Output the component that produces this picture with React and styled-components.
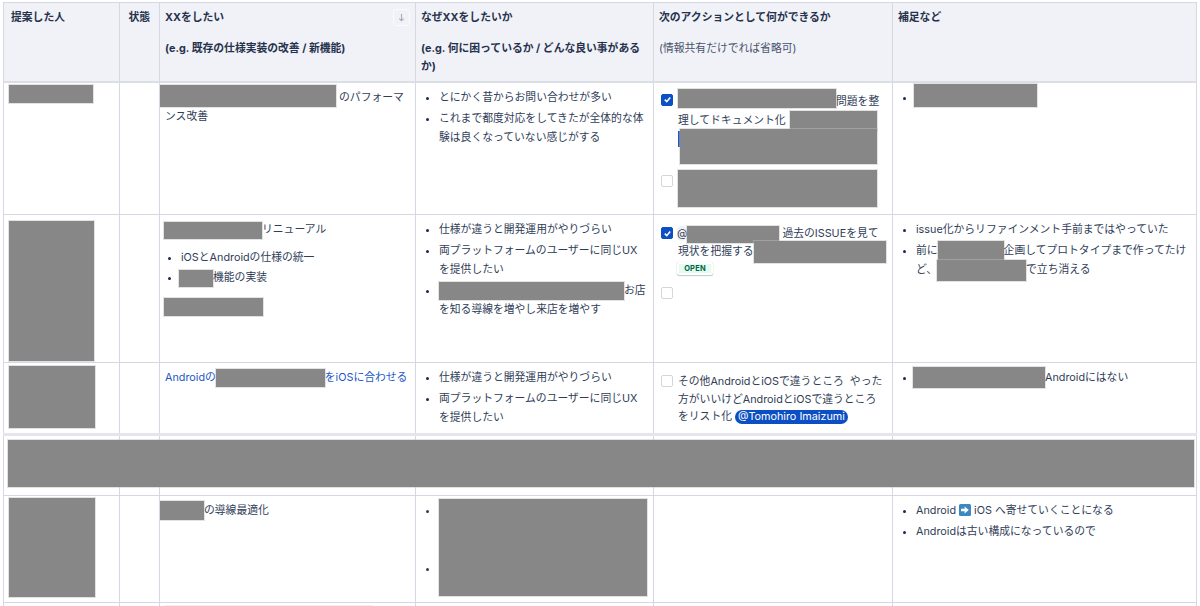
import styled, { createGlobalStyle } from 'styled-components';

const GlobalStyle = createGlobalStyle`
  html, body {
    margin: 0;
    background: #fff;
    overflow: hidden;
  }
  body {
    font-family: Inter, "Noto Sans CJK JP", sans-serif;
    font-size: 10.8px;
    color: #303d58;
  }
`;

const App = () => {
  return (
    <Page>
      <GlobalStyle />
      <Table>
        <colgroup>
          <col width="116" />
          <col width="40" />
          <col width="256" />
          <col width="238" />
          <col width="239" />
          <col width="304" />
        </colgroup>
        <thead>
          <tr>
            <Th $first>提案した人</Th>
            <Th $right>状態</Th>
            <Th>
              XXをしたい
              <SortButton><ArrowDown /></SortButton>
              <HeadNote>(e.g. 既存の仕様実装の改善 / 新機能)</HeadNote>
            </Th>
            <Th>
              なぜXXをしたいか
              <HeadNote>(e.g. 何に困っているか / どんな良い事があるか)</HeadNote>
            </Th>
            <Th>
              次のアクションとして何ができるか
              <HeadNote $plain>(情報共有だけでれば省略可)</HeadNote>
            </Th>
            <Th>補足など</Th>
          </tr>
        </thead>
        <tbody>
          <Row $h={133}>
            <Td $flush><Redact $w={84} $h={18} $block $mt={-1} /></Td>
            <Td />
            <Td>
              <Redact $w={176} $h={22} $ml={-5} $up={1} /> のパフォーマンス改善
            </Td>
            <Td>
              <Bullets>
                <li>とにかく昔からお問い合わせが多い</li>
                <li>これまで都度対応をしてきたが全体的な体験は良くなっていない感じがする</li>
              </Bullets>
            </Td>
            <Td>
              <Task $mt={2}>
                <Checkbox checked />
                <TaskText>
                  <Redact $w={158} $h={19} $up={1.5} />問題を整理してドキュメント化<Redact $w={87} $h={20} $ml={4} />
                  <SelectedRow>
                    <Selection />
                    <Redact $w={197} $h={35} $block />
                  </SelectedRow>
                </TaskText>
              </Task>
              <Task $mt={7}>
                <Checkbox />
                <TaskText $mt={-1}><Redact $w={199} $h={37} $block /></TaskText>
              </Task>
            </Td>
            <Td>
              <Bullets>
                <li><Redact $w={123} $h={23} $ml={-2} $up={1} /></li>
              </Bullets>
            </Td>
          </Row>
          <Row $h={148}>
            <Td $flush><Redact $w={85} $h={140} $block $mt={3} /></Td>
            <Td />
            <Td>
              <Redact $w={98} $h={17} $ml={-1} />リニューアル
              <InnerBullets>
                <li>iOSとAndroidの仕様の統一</li>
                <li><Redact $w={34} $h={17} $ml={-2} />機能の実装</li>
              </InnerBullets>
              <Redact $w={99} $h={18} $block $ml={-1} $mt={11} />
            </Td>
            <Td>
              <Bullets>
                <li>仕様が違うと開発運用がやりづらい</li>
                <li>両プラットフォームのユーザーに同じUXを提供したい</li>
                <li><Redact $w={185} $h={18} />お店を知る導線を増やし来店を増やす</li>
              </Bullets>
            </Td>
            <Td>
              <Task $mt={3}>
                <Checkbox checked />
                <TaskText $tight>
                  <Mention>@</Mention><Redact $w={92} $h={17} /> 過去のISSUEを見て現状を把握する<Redact $w={132} $h={22} />
                  <Lozenge><span>OPEN</span></Lozenge>
                </TaskText>
              </Task>
              <Task $mt={8}>
                <Checkbox />
              </Task>
            </Td>
            <Td>
              <Bullets>
                <li>issue化からリファインメント手前まではやっていた</li>
                <li>前に<Redact $w={66} $h={20} />企画してプロトタイプまで作ってたけど、<Redact $w={89} $h={21} />で立ち消える</li>
              </Bullets>
            </Td>
          </Row>
          <Row $h={72} $thick>
            <Td $flush><Redact $w={86} $h={62} $block /></Td>
            <Td />
            <Td>
              <Link>Androidの<Redact $w={109} $h={18} />をiOSに合わせる</Link>
            </Td>
            <Td>
              <Bullets>
                <li>仕様が違うと開発運用がやりづらい</li>
                <li>両プラットフォームのユーザーに同じUXを提供したい</li>
              </Bullets>
            </Td>
            <Td>
              <Task $mt={3}>
                <Checkbox />
                <TaskText $tight $pr={5}>
                  その他AndroidとiOSで違うところ&nbsp; やった方がいいけどAndroidとiOSで違うところをリスト化 <BlueMention>@Tomohiro Imaizumi</BlueMention>
                </TaskText>
              </Task>
            </Td>
            <Td>
              <Bullets>
                <li><Redact $w={132} $h={21} $ml={-3} $up={0.5} />Androidにはない</li>
              </Bullets>
            </Td>
          </Row>
          <Row $h={61}>
            <Td /><Td /><Td /><Td /><Td /><Td />
          </Row>
          <Row $h={107}>
            <Td $flush><Redact $w={86} $h={99} $block $mt={-1} /></Td>
            <Td />
            <Td>
              <Redact $w={44} $h={19} $ml={-5} $up={0.5} />の導線最適化
            </Td>
            <Td>
              <TallBullets>
                <li />
                <li />
                <Redact $w={208} $h={97} $over />
              </TallBullets>
            </Td>
            <Td />
            <Td>
              <Bullets>
                <li>Android <ArrowEmoji /> iOS へ寄せていくことになる</li>
                <li>Androidは古い構成になっているので</li>
              </Bullets>
            </Td>
          </Row>
          <Row $h={10}>
            <Td /><Td />
            <Td><FaintBar /></Td>
            <Td /><Td /><Td />
          </Row>
        </tbody>
      </Table>
      <WideRedact />
    </Page>
  );
};

const ArrowDown = () => (
  <svg width="9" height="9" viewBox="0 0 10 10" fill="none" stroke="#a5adba" strokeWidth="1.2">
    <path d="M5 1v7.5M2.6 6.2 5 8.6l2.4-2.4" />
  </svg>
);

const Checkbox = ({ checked }) => (
  <Box $checked={checked}>
    {checked && (
      <svg width="9" height="9" viewBox="0 0 10 10" fill="none" stroke="#fff" strokeWidth="1.8">
        <path d="M2 5.2 4.2 7.4 8 2.8" />
      </svg>
    )}
  </Box>
);

const ArrowEmoji = () => (
  <svg width="12" height="12" viewBox="0 0 12 12" style={{ verticalAlign: '-2px' }}>
    <rect width="12" height="12" rx="1.5" fill="#3b88c3" />
    <path d="M2 4.8h3.6V2.6L9.8 6 5.6 9.4V7.2H2z" fill="#fff" />
  </svg>
);

const Page = styled.div`
  position: relative;
  height: 606px;
  overflow: hidden;
  padding: 2px 0 0 3px;
  box-sizing: border-box;
`;

const Table = styled.table`
  width: 1193px;
  table-layout: fixed;
  border-collapse: collapse;
  border-top: 1px solid #d5d8e4;
`;

const Th = styled.th`
  position: relative;
  height: 79px;
  box-sizing: border-box;
  padding: 6px ${(p) => (p.$right ? '9px' : '5px')} 0 ${(p) => (p.$first ? '7px' : '5px')};
  vertical-align: top;
  text-align: ${(p) => (p.$right ? 'right' : 'left')};
  font-weight: 700;
  line-height: 18px;
  background: #f1f2f7;
  color: #26324d;
  border: 1px solid #d5d8e4;
  border-bottom: 2px solid #dcdee6;
`;

const HeadNote = styled.div`
  margin-top: 13px;
  font-weight: ${(p) => (p.$plain ? 400 : 700)};
  ${(p) => p.$plain && 'color: #47526d;'}
`;

const SortButton = styled.span`
  position: absolute;
  top: 6px;
  right: 5px;
  width: 17px;
  height: 17px;
  display: flex;
  align-items: center;
  justify-content: center;
  box-sizing: border-box;
  border: 1px solid #fbfbfd;
  border-radius: 3px;
`;

const Row = styled.tr`
  height: ${(p) => p.$h}px;
  ${(p) => p.$thick && 'border-bottom: 3px solid #e4e6ec;'}
`;

const Td = styled.td`
  padding: ${(p) => (p.$flush ? '3px 5px 0' : '5px 2px 0 5px')};
  vertical-align: top;
  line-height: 19px;
  border: 1px solid #d5d8e4;
  box-sizing: border-box;
  overflow: hidden;
`;

const Redact = styled.span`
  display: ${(p) => (p.$block ? 'block' : 'inline-block')};
  width: ${(p) => p.$w}px;
  height: ${(p) => p.$h}px;
  background: #878787;
  box-shadow: 0 0 0 1px rgba(190, 190, 190, 0.45);
  vertical-align: middle;
  margin-left: ${(p) => p.$ml || 0}px;
  margin-top: ${(p) => (p.$block ? p.$mt || 0 : -6 - 2 * (p.$up || 0))}px;
  margin-bottom: ${(p) => (p.$block ? 0 : -6 + 2 * (p.$up || 0))}px;
  ${(p) => p.$over && 'position: absolute; top: -2px; left: 18px; margin: 0;'}
`;

const WideRedact = styled.div`
  position: absolute;
  top: 440px;
  left: 8px;
  width: 1186px;
  height: 47px;
  background: #878787;
  box-shadow: 0 0 0 1px rgba(190, 190, 190, 0.45);
`;

const Bullets = styled.ul`
  margin: 0;
  padding: 0 5px 0 18px;

  li + li {
    margin-top: 2px;
  }
  li::marker {
    color: #172b4d;
  }
`;

const InnerBullets = styled(Bullets)`
  margin-top: 9px;
  padding-left: 16px;

  li + li {
    margin-top: 1px;
  }
`;

const TallBullets = styled.ul`
  position: relative;
  margin: 0;
  padding-left: 18px;

  li {
    height: 19px;
  }
  li + li {
    margin-top: 39px;
  }
`;

const Task = styled.div`
  display: flex;
  gap: 5px;
  margin-top: ${(p) => p.$mt || 0}px;
  padding-left: 2px;
`;

const Box = styled.span`
  flex: none;
  width: 12px;
  height: 12px;
  margin-top: 4px;
  box-sizing: border-box;
  display: flex;
  align-items: center;
  justify-content: center;
  border-radius: 2px;
  background: ${(p) => (p.$checked ? '#0c4fc4' : '#fff')};
  border: 1px solid ${(p) => (p.$checked ? '#0c4fc4' : '#d3d6de')};
`;

const TaskText = styled.div`
  flex: 1;
  min-width: 0;
  padding-right: ${(p) => p.$pr ?? 2}px;
  margin-top: ${(p) => p.$mt ?? 2}px;
  line-height: ${(p) => (p.$tight ? '17.5px' : '19px')};
`;

const SelectedRow = styled.div`
  display: flex;
  align-items: flex-start;
  margin-top: -1px;
`;

const Selection = styled.span`
  width: 2px;
  height: 16px;
  margin-top: 2px;
  background: #1d55c9;
`;

const Mention = styled.span`
  display: inline-block;
  margin-left: -1px;
  border-radius: 8px;
  background: #eef0f3;
  line-height: 15px;
`;

const BlueMention = styled.span`
  display: inline-block;
  padding: 0 3px;
  border-radius: 8px;
  background: #0c4fc4;
  color: #fff;
  line-height: 14px;
`;

const Lozenge = styled.span`
  display: block;
  width: 36px;
  height: 13px;
  margin: 2px 0 0 -1px;
  box-sizing: border-box;
  padding: 2px;
  border-radius: 2px;
  background: #fff;
  box-shadow: 0 1px 1px rgba(23, 43, 77, 0.25), 0 0 1px rgba(23, 43, 77, 0.25);

  span {
    display: block;
    height: 9px;
    line-height: 9px;
    text-align: center;
    font-size: 7.5px;
    font-weight: 700;
    background: #e3fcef;
    color: #006644;
    letter-spacing: 0.2px;
  }
`;

const Link = styled.a`
  color: #2257c5;
`;

const FaintBar = styled.div`
  width: 208px;
  height: 3px;
  margin-top: -3px;
  background: #eceef2;
`;

export default App;
